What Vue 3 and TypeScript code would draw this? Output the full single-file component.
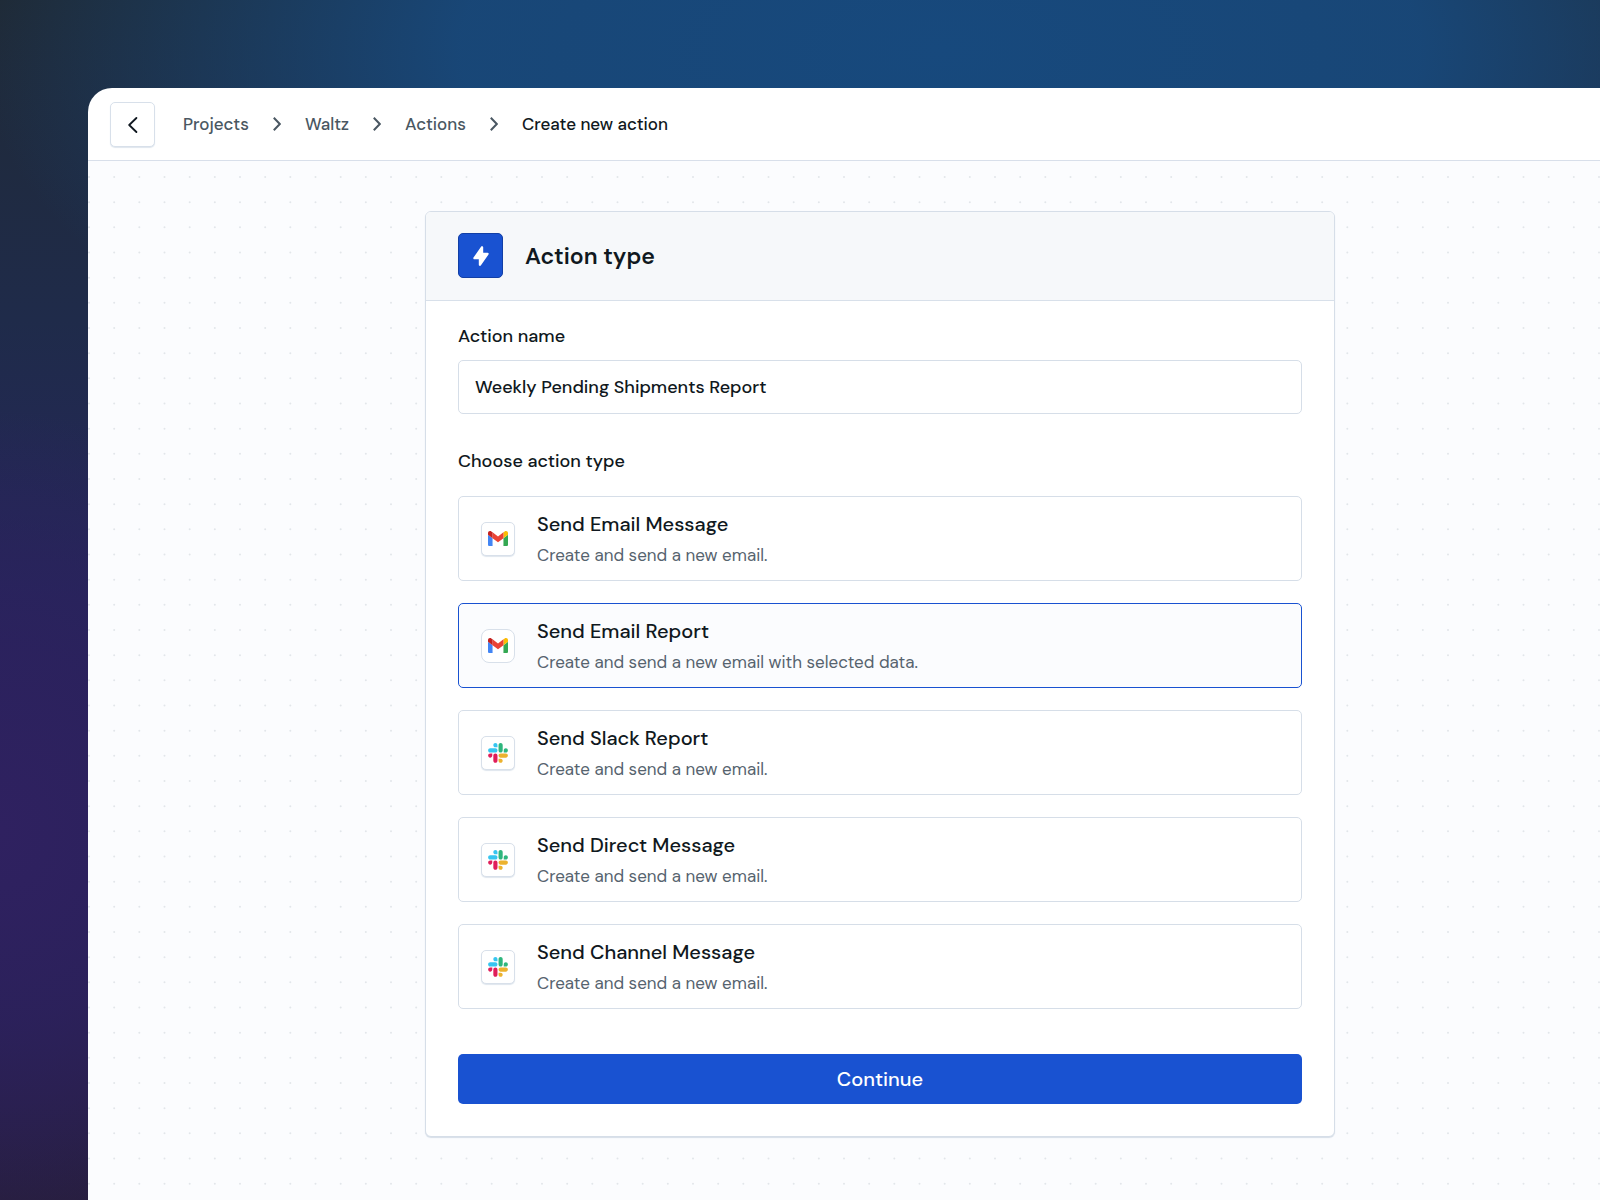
<script setup lang="ts">
import { ref } from 'vue'

type Service = 'gmail' | 'slack'

interface ActionType {
  id: string
  service: Service
  title: string
  description: string
}

const breadcrumbs = ['Projects', 'Waltz', 'Actions']

const actionTypes: ActionType[] = [
  { id: 'email-message', service: 'gmail', title: 'Send Email Message', description: 'Create and send a new email.' },
  { id: 'email-report', service: 'gmail', title: 'Send Email Report', description: 'Create and send a new email with selected data.' },
  { id: 'slack-report', service: 'slack', title: 'Send Slack Report', description: 'Create and send a new email.' },
  { id: 'direct-message', service: 'slack', title: 'Send Direct Message', description: 'Create and send a new email.' },
  { id: 'channel-message', service: 'slack', title: 'Send Channel Message', description: 'Create and send a new email.' },
]

const actionName = ref('Weekly Pending Shipments Report')
const selected = ref('email-report')
</script>

<template>
  <div class="page">
    <div class="panel">
      <header class="topbar">
        <button type="button" class="back" aria-label="Back">
          <svg width="10" height="16" viewBox="0 0 10 16" fill="none" stroke="currentColor" stroke-width="1.8" stroke-linecap="round" stroke-linejoin="round">
            <path d="M8.4 1 1.2 8l7.2 7" />
          </svg>
        </button>
        <nav class="crumbs" aria-label="Breadcrumb">
          <template v-for="crumb in breadcrumbs" :key="crumb">
            <a href="#">{{ crumb }}</a>
            <svg width="8" height="14" viewBox="0 0 8 14" fill="none" stroke="currentColor" stroke-width="2">
              <path d="M.8 .8 6.8 7l-6 6.2" />
            </svg>
          </template>
          <span class="current" aria-current="page">Create new action</span>
        </nav>
      </header>

      <main class="canvas">
        <svg class="dots" aria-hidden="true">
          <defs>
            <!-- six by six dots per tile -->
            <pattern id="dot-grid" width="151" height="151" patternUnits="userSpaceOnUse" viewBox="0 0 151 151">
              <template v-for="row in 6" :key="row">
                <circle v-for="col in 6" :key="col" :cx="(col - 1) * 151 / 6 + 1" :cy="(row - 1) * 151 / 6 + 16" r="1" />
              </template>
            </pattern>
          </defs>
          <rect width="100%" height="100%" fill="url(#dot-grid)" />
        </svg>

        <form class="card" @submit.prevent>
          <div class="card-head">
            <span class="badge">
              <svg width="22" height="22" viewBox="0 0 20 20" fill="currentColor">
                <path d="M11.3 1.046A1 1 0 0 1 12 2v5h4a1 1 0 0 1 .82 1.573l-7 10A1 1 0 0 1 8 18v-5H4a1 1 0 0 1-.82-1.573l7-10a1 1 0 0 1 1.12-.38z" />
              </svg>
            </span>
            <h1>Action type</h1>
          </div>

          <div class="card-body">
            <label class="field-label" for="action-name">Action name</label>
            <input id="action-name" v-model="actionName" class="text-input" type="text">

            <fieldset>
              <legend class="field-label">Choose action type</legend>
              <div class="options">
                <label v-for="item in actionTypes" :key="item.id" class="option" :class="{ selected: selected === item.id }">
                  <input v-model="selected" type="radio" name="action-type" :value="item.id">
                  <span class="logo">
                    <svg v-if="item.service === 'gmail'" width="20" height="15" viewBox="52 42 88 66">
                      <path fill="#4285f4" d="M58 108h14V74L52 59v43c0 3.32 2.69 6 6 6" />
                      <path fill="#34a853" d="M120 108h14c3.32 0 6-2.69 6-6V59l-20 15" />
                      <path fill="#fbbc04" d="M120 48v26l20-15v-8c0-7.42-8.47-11.65-14.4-7.2" />
                      <path fill="#ea4335" d="M72 74V48l24 18 24-18v26L96 92" />
                      <path fill="#c5221f" d="M52 51v8l20 15V48l-5.6-4.2c-5.94-4.45-14.4-.22-14.4 7.2" />
                    </svg>
                    <svg v-else width="20" height="20" viewBox="0 0 127 127">
                      <path fill="#e01e5a" d="M27.2 80c0 7.3-5.9 13.2-13.2 13.2C6.7 93.2.8 87.3.8 80c0-7.3 5.9-13.2 13.2-13.2h13.2V80zm6.6 0c0-7.3 5.9-13.2 13.2-13.2 7.3 0 13.2 5.9 13.2 13.2v33c0 7.3-5.9 13.2-13.2 13.2-7.3 0-13.2-5.9-13.2-13.2V80z" />
                      <path fill="#36c5f0" d="M47 27c-7.3 0-13.2-5.9-13.2-13.2C33.8 6.5 39.7.6 47 .6c7.3 0 13.2 5.9 13.2 13.2V27H47zm0 6.7c7.3 0 13.2 5.9 13.2 13.2 0 7.3-5.9 13.2-13.2 13.2H13.9C6.6 60.1.7 54.2.7 46.9c0-7.3 5.9-13.2 13.2-13.2H47z" />
                      <path fill="#2eb67d" d="M99.9 46.9c0-7.3 5.9-13.2 13.2-13.2 7.3 0 13.2 5.9 13.2 13.2 0 7.3-5.9 13.2-13.2 13.2H99.9V46.9zm-6.6 0c0 7.3-5.9 13.2-13.2 13.2-7.3 0-13.2-5.9-13.2-13.2V13.8C66.9 6.5 72.8.6 80.1.6c7.3 0 13.2 5.9 13.2 13.2v33.1z" />
                      <path fill="#ecb22e" d="M80.1 99.8c7.3 0 13.2 5.9 13.2 13.2 0 7.3-5.9 13.2-13.2 13.2-7.3 0-13.2-5.9-13.2-13.2V99.8h13.2zm0-6.6c-7.3 0-13.2-5.9-13.2-13.2 0-7.3 5.9-13.2 13.2-13.2h33.1c7.3 0 13.2 5.9 13.2 13.2 0 7.3-5.9 13.2-13.2 13.2H80.1z" />
                    </svg>
                  </span>
                  <span class="copy">
                    <span class="title">{{ item.title }}</span>
                    <span class="description">{{ item.description }}</span>
                  </span>
                </label>
              </div>
            </fieldset>

            <button type="submit" class="submit">Continue</button>
          </div>
        </form>
      </main>
    </div>
  </div>
</template>

<style>
body {
  margin: 0;
}
</style>

<style scoped>
* {
  box-sizing: border-box;
}

.page {
  min-height: 100vh;
  padding: 88px 0 0 88px;
  display: flex;
  background:
    radial-gradient(ellipse 340px 420px at 0 830px, #2f2160 0%, rgba(44, 33, 94, 0.8) 45%, rgba(38, 33, 84, 0) 100%),
    radial-gradient(ellipse 960px 440px at 940px 50px, #17497d 0%, rgba(24, 72, 122, 0.95) 50%, rgba(26, 58, 100, 0) 100%),
    linear-gradient(to bottom, #1f2a36 0, #1f2b4a 320px, #25265a 600px, #2b2158 880px, #271e3c 1200px);
  color: #101820;
  font-family: "DM Sans", Inter, sans-serif;
  font-size: 18px;
  line-height: 24px;
}

.panel {
  flex: 1;
  min-width: 0;
  display: flex;
  flex-direction: column;
  overflow: hidden;
  border-radius: 24px 0 0 0;
  background: #fff;
}

.topbar {
  display: flex;
  align-items: center;
  gap: 28px;
  padding: 14px 22px 13px;
  border-bottom: 1px solid #d8dfea;
}

.back {
  width: 45px;
  height: 45px;
  padding: 0;
  display: grid;
  place-items: center;
  border: 1px solid #d8e0ea;
  border-radius: 5px;
  background: #fff;
  box-shadow: 0 1px 1px #dfe6ee;
  color: #101820;
}

.crumbs {
  display: flex;
  align-items: center;
  gap: 24px;
  padding-bottom: 1px;
  color: #4a5762;
  font-size: 17px;
  font-weight: 500;
}

.crumbs a {
  color: inherit;
  text-decoration: none;
}

.current {
  color: #101820;
}

.canvas {
  flex: 1;
  position: relative;
  padding: 50px 265px 62px 337px;
  background: #fbfcfe;
}

.dots {
  position: absolute;
  inset: 0;
  width: 100%;
  height: 100%;
  fill: #e2e6ea;
}

.card {
  position: relative;
  overflow: hidden;
  border: 1px solid #d6dee8;
  border-radius: 6px;
  background: #fff;
  box-shadow: 0 1px 1px #d6dee8;
}

.card-head {
  display: flex;
  align-items: center;
  gap: 22px;
  padding: 21px 32px 22px;
  border-bottom: 1px solid #d8e0ea;
  background: #f6f8fa;
}

.badge {
  width: 45px;
  height: 45px;
  display: grid;
  place-items: center;
  border: 1px solid #123fa6;
  border-radius: 5px;
  background: #1952d1;
  color: #fff;
}

h1 {
  margin: 0;
  font-size: 23px;
  font-weight: 600;
  line-height: 30px;
}

.card-body {
  display: flex;
  flex-direction: column;
  padding: 23px 32px 32px;
}

.field-label {
  padding: 0;
  font-weight: 500;
}

.text-input {
  width: 100%;
  height: 54px;
  margin: 12px 0 35px;
  padding: 0 16px;
  border: 1px solid #d6dee8;
  border-radius: 5px;
  background: #fff;
  color: inherit;
  font: inherit;
  font-weight: 500;
}

fieldset {
  min-width: 0;
  margin: 0;
  padding: 0;
  border: 0;
}

.options {
  display: flex;
  flex-direction: column;
  gap: 22px;
  padding-top: 23px;
}

.option {
  position: relative;
  min-height: 85px;
  display: flex;
  align-items: center;
  gap: 22px;
  padding: 0 22px;
  border: 1px solid #d6dee8;
  border-radius: 5px;
  background: #fff;
  cursor: pointer;
}

.option input {
  position: absolute;
  inset: 0;
  margin: 0;
  opacity: 0;
}

.option.selected {
  border-color: #1952d1;
  background: #fbfcfe;
}

.logo {
  width: 34px;
  height: 34px;
  display: grid;
  place-items: center;
  border: 1px solid #d8e0ea;
  border-radius: 5px;
  background: #fff;
  box-shadow: 0 1px 1px #dfe6ee;
}

.selected .logo {
  border-radius: 8px;
  box-shadow: none;
}

.copy {
  display: flex;
  flex-direction: column;
  gap: 7px;
}

.title {
  font-size: 20px;
  font-weight: 500;
  line-height: 25px;
}

.description {
  color: #56636e;
  font-size: 17px;
  line-height: 22px;
}

.submit {
  height: 50px;
  margin-top: 45px;
  border: 0;
  border-radius: 5px;
  background: #1952d1;
  color: #fff;
  font: inherit;
  font-size: 20px;
  font-weight: 500;
}
</style>
